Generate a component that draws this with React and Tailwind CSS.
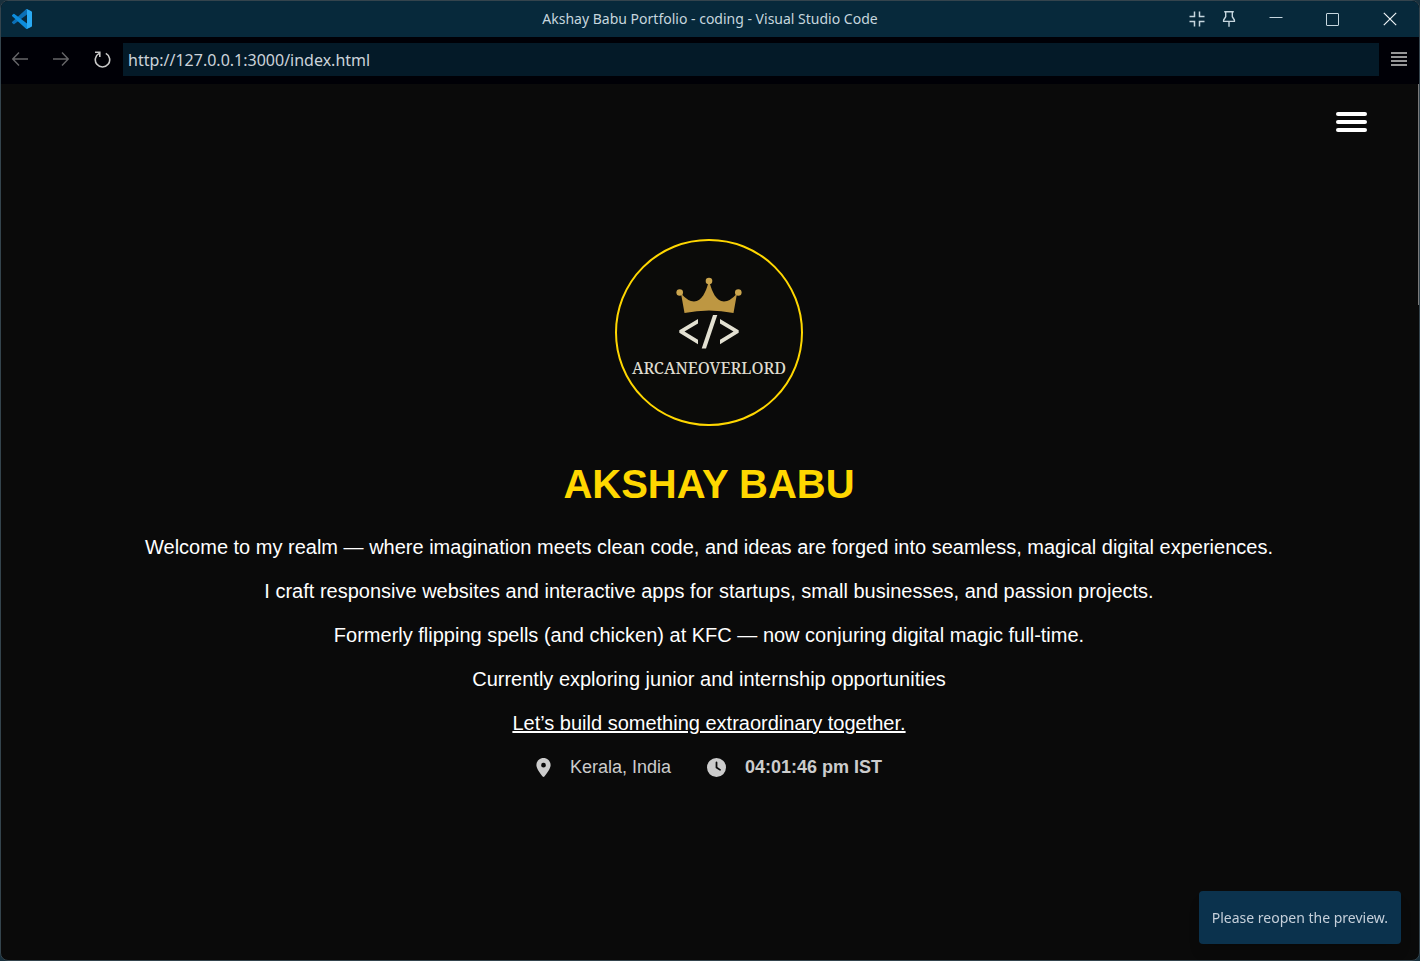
import { FaClock, FaLocationDot } from "react-icons/fa6";

const introLines = [
  "Welcome to my realm — where imagination meets clean code, and ideas are forged into seamless, magical digital experiences.",
  "I craft responsive websites and interactive apps for startups, small businesses, and passion projects.",
  "Formerly flipping spells (and chicken) at KFC — now conjuring digital magic full-time.",
  "Currently exploring junior and internship opportunities",
];

function VSCodeLogo() {
  return (
    <svg viewBox="0 0 100 100" className="size-5" aria-hidden="true">
      <path d="M96.5 10.8 75.9.9a6.2 6.2 0 0 0-7.1 1.2L1.3 63.6a4.2 4.2 0 0 0 0 6.2l5.5 5a4.2 4.2 0 0 0 5.3.2L93.4 13.4c2.7-2.1 6.6-.1 6.6 3.3v-.3c0-2.4-1.4-4.6-3.5-5.6Z" fill="#0b6fb5" />
      <path d="m96.5 89.2-20.6 9.9a6.2 6.2 0 0 1-7.1-1.2L1.3 36.4a4.2 4.2 0 0 1 0-6.2l5.5-5a4.2 4.2 0 0 1 5.3-.2l81.3 61.6c2.7 2.1 6.6.1 6.6-3.3v.3c0 2.4-1.4 4.6-3.5 5.6Z" fill="#0d8ddb" />
      <path d="M75.9 99.1a6.2 6.2 0 0 1-7.1-1.2c2.3 2.3 6.2.7 6.2-2.6V4.7c0-3.3-3.9-4.9-6.2-2.6A6.2 6.2 0 0 1 75.9.9l20.6 9.9a6.2 6.2 0 0 1 3.5 5.6v67.2c0 2.4-1.4 4.6-3.5 5.6Z" fill="#2aaaf3" />
    </svg>
  );
}

function TitleBar() {
  const toolButton = "flex h-full w-8 items-center justify-center";
  const windowButton = "flex h-full w-[58px] items-center justify-center";
  return (
    <header className="grid h-9 grid-cols-[1fr_auto_1fr] items-center bg-[#07293b] text-[#c6d6de]">
      <div className="pl-[11px]">
        <VSCodeLogo />
      </div>
      <h1 className="text-[14px] leading-5">Akshay Babu Portfolio - coding - Visual Studio Code</h1>
      <div className="flex h-full items-center justify-end gap-1">
        <div className="flex h-full">
          <button type="button" aria-label="Exit compact mode" className={toolButton}>
            <svg viewBox="0 0 16 16" className="size-4" fill="none" stroke="currentColor" strokeWidth="1.5">
              <path d="M5.500 0.500v5H0.500M10.500 0.500v5h5M5.500 15.500v-5H0.500M10.500 15.500v-5h5" />
            </svg>
          </button>
          <button type="button" aria-label="Pin window" className={toolButton}>
            <svg viewBox="0 0 16 16" className="size-4" fill="none" stroke="currentColor" strokeWidth="1.4">
              <path d="M3.200 .7h9.600M4.700.7v5L2.600 9v1.400h10.800V9l-2.100-3.300v-5M8 10.400v5.400" />
            </svg>
          </button>
        </div>
        <div className="flex h-full">
          <button type="button" aria-label="Minimize" className="flex h-full w-[54px] items-center justify-center">
            <svg viewBox="0 0 14 14" className="size-[14px]" stroke="currentColor">
              <path d="M.5 5.500h13" />
            </svg>
          </button>
          <button type="button" aria-label="Maximize" className={windowButton}>
            <svg viewBox="0 0 13 13" className="size-[13px]" fill="none" stroke="currentColor">
              <rect x=".5" y=".5" width="12" height="12" rx=".5" />
            </svg>
          </button>
          <button type="button" aria-label="Close" className={windowButton}>
            <svg viewBox="0 0 14 14" className="size-[14px]" stroke="#eef4f6" strokeWidth="1.2">
              <path d="m.8.8 12.4 12.4M13.2.8.8 13.2" />
            </svg>
          </button>
        </div>
      </div>
    </header>
  );
}

function BrowserBar() {
  const button = "flex h-8 w-[41px] items-center justify-center";
  return (
    <nav aria-label="Preview" className="flex h-[47px] items-center bg-[#000006] pb-[3px] text-[#c8c8c8]">
      <button type="button" aria-label="Back" className="flex h-8 w-[38px] items-center justify-center text-[#656568]">
        <svg viewBox="0 0 16 14" className="h-[14px] w-4" fill="none" stroke="currentColor" strokeWidth="1.4">
          <path d="M7 .5.8 7 7 13.5M.8 7H16" />
        </svg>
      </button>
      <button type="button" aria-label="Forward" className="flex h-8 w-[43px] items-center justify-center text-[#656568]">
        <svg viewBox="0 0 16 14" className="h-[14px] w-4" fill="none" stroke="currentColor" strokeWidth="1.4">
          <path d="M9 .5 15.2 7 9 13.5M15.2 7H0" />
        </svg>
      </button>
      <button type="button" aria-label="Reload" className={button}>
        <svg viewBox="0 0 17 17" className="size-[17px]" fill="none" stroke="currentColor" strokeWidth="1.6">
          <path d="M5.2 2.4A7.2 7.2 0 1 0 11.8 2.4" />
          <path d="M1 1.2h4.800v4.800" />
        </svg>
      </button>
      <input
        type="text"
        aria-label="Address"
        defaultValue="http://127.0.0.1:3000/index.html"
        className="h-[33px] min-w-0 flex-1 bg-[#041a28] px-[5px] pt-[2px] text-[16px] leading-6 text-[#ccd3da] outline-none"
      />
      <button type="button" aria-label="More actions" className="flex h-8 w-10 items-center justify-center">
        <svg viewBox="0 0 16 14" className="h-[14px] w-4" stroke="currentColor" strokeWidth="1.3">
          <path d="M0 1h16M0 5h16M0 9h16M0 13h16" />
        </svg>
      </button>
    </nav>
  );
}

function Emblem() {
  return (
    <div className="flex h-[187px] w-[188px] flex-col items-center rounded-full border-2 border-[#ffd700] bg-[#0b0b09] pt-9">
      <svg viewBox="0 0 66 72" className="h-[72px] w-[66px]" aria-hidden="true">
        <g fill="#be9742">
          <path d="M5 16.5Q12 24.500 18 24.500C26 24.500 30 14 32 7h2c2 7 6 17.500 14 17.500Q54 24.500 61 16.500L57.500 36Q33 31 8.500 36Z" />
          <g fill="#cca64e">
            <circle cx="33" cy="4" r="3.300" />
            <circle cx="3.700" cy="15.500" r="3.300" />
            <circle cx="62.300" cy="15.500" r="3.300" />
          </g>
        </g>
        <g fill="#e3e1d2">
          <path d="M22 42v4.500L8.500 54.500 22 62.800v4.500L3.300 55.700v-2.400Z" />
          <path d="M44 42v4.500l13.500 8L44 62.800v4.500L62.700 55.700v-2.400Z" />
          <path d="M37 38h4.300L30 71.500h-4.300Z" />
        </g>
      </svg>
      <span className="mt-[9px] font-['Noto_Serif','Liberation_Serif',serif] text-[16px] font-medium leading-5 text-[#dedccf]">ARCANEOVERLORD</span>
    </div>
  );
}

function Hero() {
  return (
    <main className="flex flex-col items-center px-6 pt-[107px] text-center text-[20px] leading-6 text-white">
      <Emblem />
      <h2 className="mt-8 text-[40px] font-bold leading-[52px] text-[#ffd700]">AKSHAY BABU</h2>
      <div className="mt-[25px] flex flex-col items-center gap-5">
        {introLines.map((line) => (
          <p key={line}>{line}</p>
        ))}
        <a href="#contact" className="underline">Let’s build something extraordinary together.</a>
      </div>
      <div className="mt-5 flex items-center gap-9 text-[18px] text-[#cccccc]">
        <span className="flex items-center gap-[19px]">
          <FaLocationDot className="h-[19px] w-[15px]" aria-hidden="true" />
          Kerala, India
        </span>
        <span className="flex items-center gap-[19px]">
          <FaClock className="size-[19px]" aria-hidden="true" />
          <strong>04:01:46 pm IST</strong>
        </span>
      </div>
    </main>
  );
}

export default function App() {
  return (
    <div className="min-h-screen bg-[#18303d] font-['Noto_Sans',sans-serif]">
      <div className="flex min-h-screen flex-col overflow-hidden rounded-lg border border-[#34444d] bg-[#0a0a0a]">
        <TitleBar />
        <BrowserBar />
        <div className="flex flex-1">
          <div className="flex min-w-0 flex-1 flex-col font-['Liberation_Sans',Arial,sans-serif]">
            <div className="flex justify-end pr-[50px] pt-7">
              <button type="button" aria-label="Open menu" className="flex w-[31px] flex-col gap-1">
                <span className="h-1 w-full rounded-sm bg-white" />
                <span className="h-1 w-full rounded-sm bg-white" />
                <span className="h-1 w-full rounded-sm bg-white" />
              </button>
            </div>
            <Hero />
          </div>
          <div className="flex w-[2px] justify-end" aria-hidden="true">
            <div className="h-[221px] w-px bg-[#7a7a7a]" />
          </div>
        </div>
      </div>
      <div role="status" className="fixed bottom-[17px] right-[19px] flex h-[53px] items-center rounded bg-[#0b324d] px-[13px] text-[14px] leading-5 text-[#c5cfda] shadow-lg">
        Please reopen the preview.
      </div>
    </div>
  );
}
